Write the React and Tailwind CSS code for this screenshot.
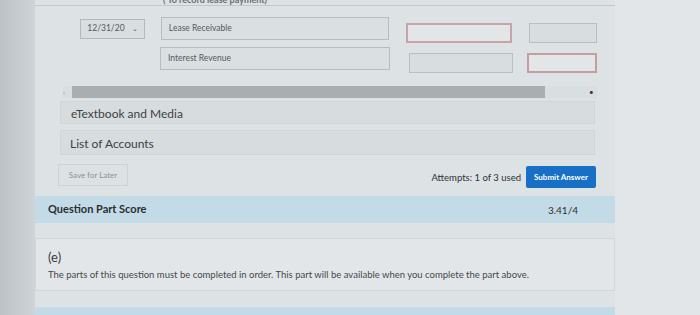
import React from 'react';

const App = () => {
    return (
        <div className="w-[700px] h-[315px] overflow-hidden flex bg-[#dde2e4] text-[#3a3d40]" style={{ fontFamily: 'Lato, "Open Sans", sans-serif' }}>
            {/* Left dark edge */}
            <div className="w-[35px] h-full bg-gradient-to-r from-[#bcc2c6] to-[#cfd4d7]" />

            {/* Main column */}
            <div className="w-[580px] h-full flex flex-col">
                {/* Top cut-off heading */}
                <div className="h-[6px] border-b border-[#c4c8cb] relative overflow-hidden">
                    <span className="absolute left-[128px] -top-[7px] text-[9px] text-[#6b6f73] font-bold">( To record lease payment)</span>
                </div>

                {/* Journal rows */}
                <div className="pl-[45px] pr-[18px] pt-[11px] flex flex-col gap-[7px]">
                    <div className="flex items-center h-[23px]">
                        <div className="w-[65px] h-[20px] border border-[#b4b9bd] bg-[#d9dee0] flex items-center justify-center gap-[7px] text-[8.5px] text-[#55595d]">
                            12/31/20 <span className="text-[7px]">⌄</span>
                        </div>
                        <div className="ml-[16px] w-[229px] h-[23px] border border-[#b7bcc0] bg-[#dadfe1] flex items-center px-[7px] text-[8.5px] text-[#55595d]">
                            Lease Receivable
                        </div>
                        <div className="ml-[17px] mt-[8px] w-[106px] h-[20px] border-2 border-[#c9a3a8] bg-[#e3e6e7]" />
                        <div className="ml-[17px] mt-[9px] w-[68px] h-[20px] border border-[#b9bec1] bg-[#d8dddf]" />
                    </div>
                    <div className="flex items-center h-[23px]">
                        <div className="w-[65px]" />
                        <div className="ml-[15px] w-[230px] h-[23px] border border-[#b7bcc0] bg-[#dadfe1] flex items-center px-[7px] text-[8.5px] text-[#55595d]">
                            Interest Revenue
                        </div>
                        <div className="ml-[19px] mt-[8px] w-[104px] h-[20px] border border-[#b9bec1] bg-[#d8dddf]" />
                        <div className="ml-[14px] mt-[9px] w-[70px] h-[20px] border-2 border-[#c49ca1] bg-[#e3e6e7]" />
                    </div>
                </div>

                {/* Scrollbar */}
                <div className="mt-[16px] ml-[28px] mr-[18px] h-[12px] flex items-center bg-[#d9dee0]">
                    <span className="w-[9px] text-[7px] text-[#8a8e91] leading-none">‹</span>
                    <div className="w-[473px] h-[12px] bg-[#a9aeb1]" />
                    <div className="flex-1" />
                    <span className="w-[8px] text-[8px] text-[#333] leading-none">•</span>
                </div>

                {/* Panels */}
                <div className="ml-[25px] mr-[20px] mt-[3px] flex flex-col gap-[6px]">
                    <div className="h-[23px] bg-[#d7dcde] border border-[#d0d5d8] flex items-center pt-[3px] px-[10px] text-[12px] text-[#3d4144]">
                        eTextbook and Media
                    </div>
                    <div className="h-[25px] bg-[#d7dcde] border border-[#d0d5d8] flex items-center pt-[2px] px-[9px] text-[12px] text-[#3d4144]">
                        List of Accounts
                    </div>
                </div>

                {/* Actions */}
                <div className="ml-[23px] mr-[19px] mt-[6px] flex items-center">
                    <div className="w-[70px] h-[22px] border border-[#cdd2d4] bg-[#dce1e3] flex items-center justify-center text-[8px] text-[#8d9194]">
                        Save for Later
                    </div>
                    <div className="flex-1" />
                    <span className="mt-[8px] text-[9.5px] text-[#2e3134]">Attempts: 1 of 3 used</span>
                    <div className="ml-[5px] mt-[5px] w-[70px] h-[22px] rounded-[2px] bg-[#1870c6] flex items-center justify-center text-[8px] font-bold text-white">
                        Submit Answer
                    </div>
                </div>

                {/* Score band */}
                <div className="mt-[8px] h-[27px] bg-[#c3dbe6] flex items-center justify-between pl-[13px] pr-[37px]">
                    <span className="text-[11px] font-bold text-[#2b2e31]">Question Part Score</span>
                    <span className="mt-[2px] text-[10px] text-[#2b2e31]">3.41/4</span>
                </div>

                {/* Part (e) */}
                <div className="mt-[15px] h-[53px] bg-[#e3e6e8] border border-[#d2d6d9] flex flex-col justify-center pl-[12px] pt-[2px]">
                    <span className="text-[13px] text-[#3a3d40] leading-[16px]">(e)</span>
                    <span className="text-[9.5px] text-[#44484b] leading-[14px] mt-[3px]">
                        The parts of this question must be completed in order. This part will be available when you complete the part above.
                    </span>
                </div>

                <div className="mt-[16px] flex-1 bg-[#c3dbe6]" />
            </div>

            {/* Right light strip */}
            <div className="flex-1 h-full bg-[#e3e6e8]" />
        </div>
    );
};

export default App;
